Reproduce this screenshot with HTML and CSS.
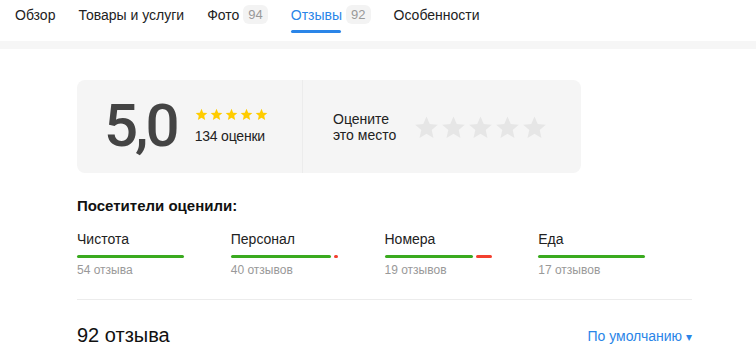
FILE: index.html
```html
<!DOCTYPE html>
<html lang="ru">

<head>
  <meta charset="UTF-8">
  <meta name="viewport" content="width=device-width, initial-scale=1.0">
  <title>Отзывы</title>
  <link rel="stylesheet" href="styles.css">
</head>

<body>
  <svg width="0" height="0" class="defs">
    <symbol id="star" viewBox="0 0 24 24">
      <path d="M12 1.5l3.1 7.1 7.7.7-5.8 5.1 1.7 7.6L12 18l-6.7 4 1.7-7.6-5.8-5.1 7.7-.7z" />
    </symbol>
  </svg>

  <nav class="tabs">
    <div class="tab">Обзор</div>
    <div class="tab">Товары и услуги</div>
    <div class="tab">Фото <span class="badge">94</span></div>
    <div class="tab active">Отзывы <span class="badge">92</span></div>
    <div class="tab">Особенности</div>
  </nav>
  <div class="band"></div>

  <main class="content">
    <div class="rating-card">
      <div class="rating-total">
        <div class="score">5,0</div>
        <div class="score-info">
          <div class="stars-small">
            <svg><use href="#star" /></svg>
            <svg><use href="#star" /></svg>
            <svg><use href="#star" /></svg>
            <svg><use href="#star" /></svg>
            <svg><use href="#star" /></svg>
          </div>
          <div class="count">134 оценки</div>
        </div>
      </div>
      <div class="rate-place">
        <div class="rate-text">Оцените<br>это место</div>
        <div class="stars-big">
          <svg><use href="#star" /></svg>
          <svg><use href="#star" /></svg>
          <svg><use href="#star" /></svg>
          <svg><use href="#star" /></svg>
          <svg><use href="#star" /></svg>
        </div>
      </div>
    </div>

    <h2 class="aspects-title">Посетители оценили:</h2>
    <div class="aspects">
      <div class="aspect">
        <div class="aspect-name">Чистота</div>
        <div class="aspect-bar"><span class="good" style="width: 100%"></span></div>
        <div class="aspect-count">54 отзыва</div>
      </div>
      <div class="aspect">
        <div class="aspect-name">Персонал</div>
        <div class="aspect-bar"><span class="good" style="width: 94%"></span><span class="bad" style="width: 4%"></span></div>
        <div class="aspect-count">40 отзывов</div>
      </div>
      <div class="aspect">
        <div class="aspect-name">Номера</div>
        <div class="aspect-bar"><span class="good" style="width: 83%"></span><span class="bad" style="width: 15%"></span></div>
        <div class="aspect-count">19 отзывов</div>
      </div>
      <div class="aspect">
        <div class="aspect-name">Еда</div>
        <div class="aspect-bar"><span class="good" style="width: 100%"></span></div>
        <div class="aspect-count">17 отзывов</div>
      </div>
    </div>

    <div class="reviews-head">
      <div class="reviews-total">92 отзыва</div>
      <div class="sort">По умолчанию <span class="arrow">▾</span></div>
    </div>
  </main>
</body>

</html>
```

FILE: styles.css
```css
body {
  font-family: 'Liberation Sans', Arial, sans-serif;
  color: #222;
  margin: 0;
  padding: 0;
  background-color: #fff;
}

.defs {
  position: absolute;
}

/* вкладки */
.tabs {
  display: flex;
  gap: 23px;
  height: 41px;
  padding: 5px 15px 0;
  box-sizing: border-box;
  font-size: 14px;
}

.tab {
  display: flex;
  align-items: flex-start;
  gap: 4px;
  line-height: 19px;
  height: 28px;
  box-sizing: border-box;
  padding-top: 1px;
  position: relative;
}

.tab.active {
  color: #2a85e8;
}

.tab.active::after {
  content: "";
  position: absolute;
  left: 0;
  bottom: 0;
  width: 50px;
  height: 3px;
  border-radius: 2px;
  background-color: #2a85e8;
}

.badge {
  margin-top: -1px;
  padding: 0 5px;
  height: 19px;
  line-height: 19px;
  border-radius: 6px;
  background-color: #f3f3f3;
  color: #999;
  font-size: 13px;
}

.band {
  height: 8px;
  background-color: #f6f6f6;
}

.content {
  width: 615px;
  margin-left: 77px;
  padding-top: 31px;
}

/* карточка рейтинга */
.rating-card {
  display: flex;
  width: 504px;
  height: 93px;
  border-radius: 8px;
  background-color: #f5f5f5;
}

.rating-total {
  display: flex;
  align-items: center;
  width: 226px;
  padding-left: 27px;
  box-sizing: border-box;
  border-right: 1px solid #ececec;
}

.score {
  font-family: Roboto, sans-serif;
  font-weight: 500;
  font-size: 60px;
  letter-spacing: -3px;
  color: #444;
  line-height: 1;
  margin-top: -2px;
}

.score-info {
  margin-left: 18px;
  margin-top: -2px;
}

.stars-small {
  display: flex;
  gap: 2px;
}

.stars-small svg {
  width: 13px;
  height: 13px;
  fill: #fc0;
}

.count {
  margin-top: 7px;
  font-size: 14px;
  letter-spacing: -0.2px;
}

.rate-place {
  display: flex;
  align-items: center;
  padding-left: 30px;
}

.rate-text {
  font-size: 14px;
  line-height: 16px;
  width: 81px;
}

.stars-big {
  display: flex;
  gap: 2px;
  margin-top: 2px;
}

.stars-big svg {
  width: 25px;
  height: 25px;
  fill: #e6e6e6;
}

/* аспекты */
.aspects-title {
  margin: 23px 0 0;
  font-size: 15px;
  font-weight: bold;
  line-height: 20px;
  color: #111;
}

.aspects {
  display: grid;
  grid-template-columns: repeat(4, 1fr);
  margin-top: 15px;
  padding-bottom: 22px;
  border-bottom: 1px solid #ececec;
}

.aspect-name {
  font-size: 14px;
  line-height: 17px;
}

.aspect-bar {
  display: flex;
  gap: 3px;
  width: 107px;
  height: 3px;
  margin-top: 7px;
}

.aspect-bar span {
  display: block;
  height: 3px;
  border-radius: 2px;
}

.aspect-bar .good {
  background-color: #3aaa1f;
}

.aspect-bar .bad {
  background-color: #f3402f;
}

.aspect-count {
  margin-top: 5px;
  font-size: 12px;
  color: #999;
}

.reviews-head {
  display: flex;
  justify-content: space-between;
  align-items: center;
  margin-top: 24px;
}

.reviews-total {
  font-size: 20px;
  color: #111;
}

.sort {
  font-size: 14px;
  color: #2a85e8;
}

.arrow {
  font-size: 12px;
}
```
